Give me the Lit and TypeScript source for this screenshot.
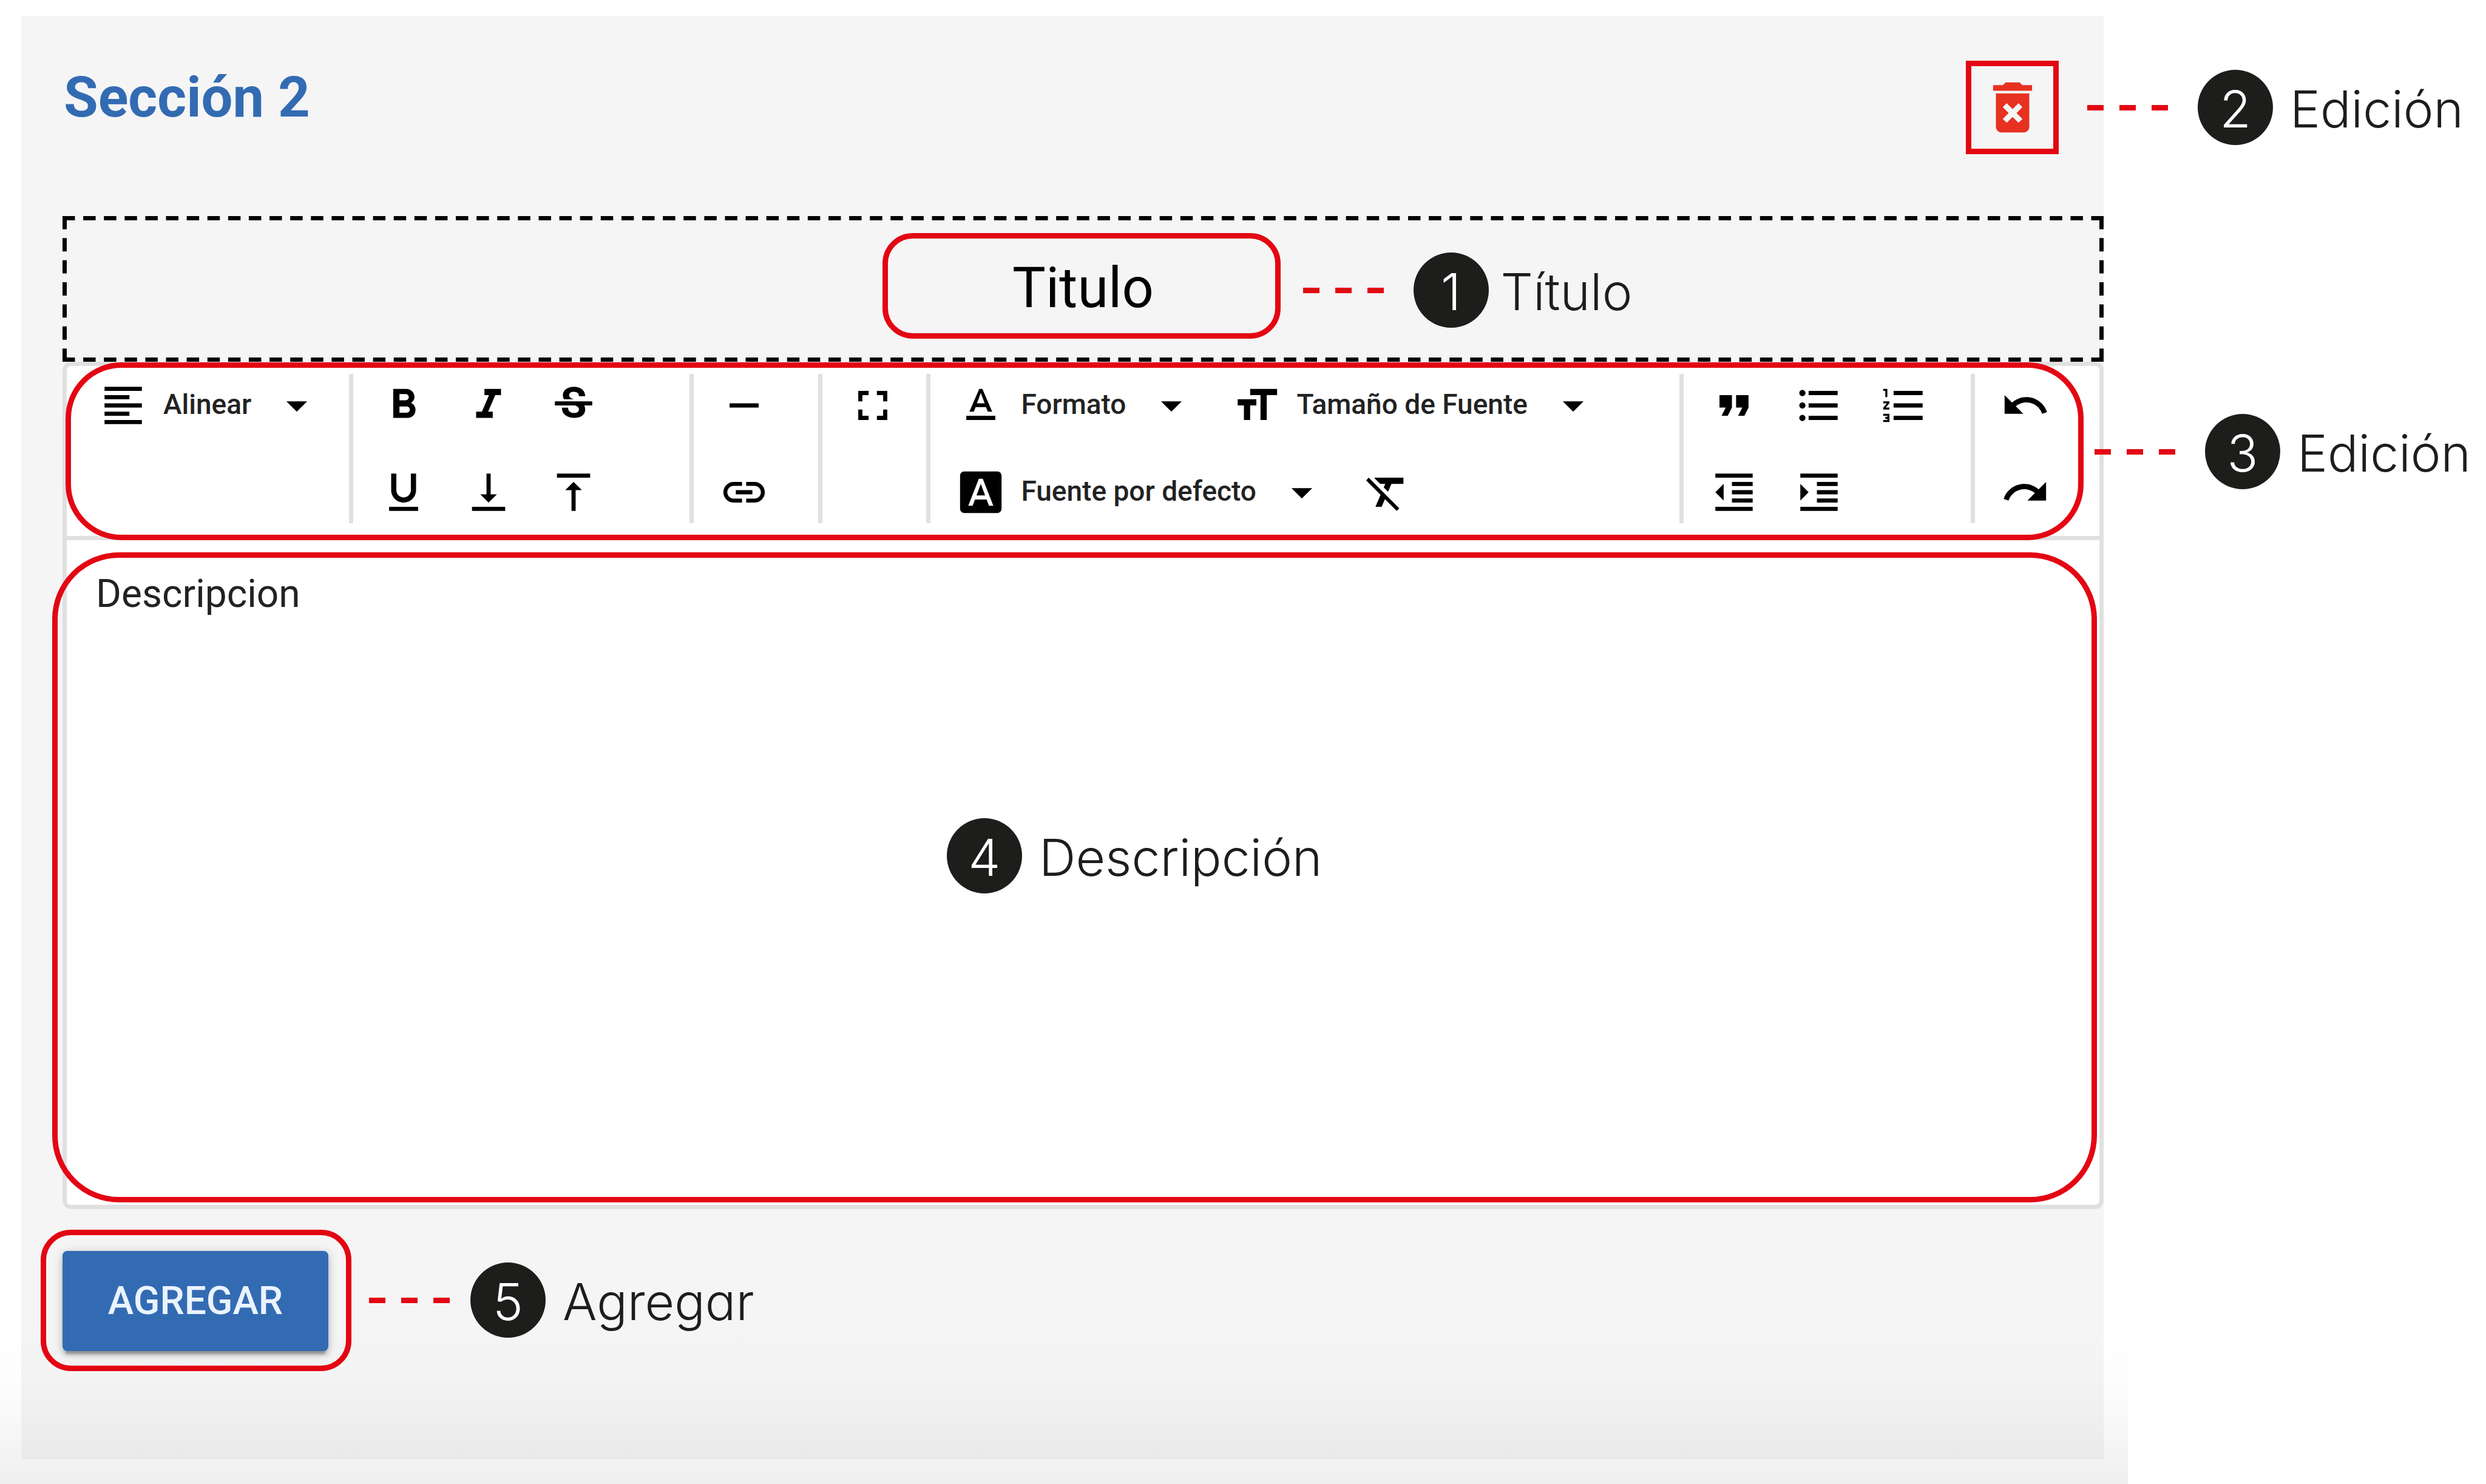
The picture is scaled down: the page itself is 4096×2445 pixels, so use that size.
import { LitElement, html, css, svg } from "lit";
import { customElement, property } from "lit/decorators.js";

/** Glyphs on a 24-unit grid. */
const ICONS: Record<string, string> = {
  alignLeft: "M15 15H3v2h12v-2zm0-8H3v2h12V7zM3 13h18v-2H3v2zm0 8h18v-2H3v2zM3 3v2h18V3H3z",
  caret: "M7 10l5 5 5-5z",
  bold: "M15.6 10.79c.97-.67 1.65-1.77 1.65-2.79 0-2.26-1.75-4-4-4H7v14h7.04c2.09 0 3.71-1.7 3.71-3.79 0-1.52-.86-2.82-2.15-3.42zM10 6.5h3c.83 0 1.5.67 1.5 1.5s-.67 1.5-1.5 1.5h-3v-3zm3.5 9H10v-3h3.5c.83 0 1.5.67 1.5 1.5s-.67 1.5-1.5 1.5z",
  italic: "M10 4v3h2.21l-3.42 8H6v3h8v-3h-2.21l3.42-8H18V4z",
  strike: "M7.24 8.75c-.26-.48-.39-1.03-.39-1.67 0-.61.13-1.16.4-1.67.26-.5.63-.93 1.11-1.29.48-.35 1.05-.63 1.7-.83.66-.19 1.39-.29 2.18-.29.81 0 1.54.11 2.21.34.66.22 1.23.54 1.69.94.47.4.83.88 1.08 1.43s.38 1.15.38 1.81h-3.01c0-.31-.05-.59-.15-.85-.09-.27-.24-.49-.44-.68-.2-.19-.45-.33-.75-.44-.3-.1-.66-.16-1.06-.16-.39 0-.74.04-1.03.13s-.53.21-.72.36c-.19.16-.34.34-.44.55-.1.21-.15.43-.15.66 0 .48.25.88.74 1.21.38.25.77.48 1.41.7H7.39c-.05-.08-.11-.17-.15-.25zM21 12v-2H3v2h9.62c.18.07.4.14.55.2.37.17.66.34.87.51s.35.36.43.57c.07.2.11.43.11.69 0 .23-.05.45-.14.66-.09.2-.23.38-.42.53-.19.15-.42.26-.71.35-.29.08-.63.13-1.01.13-.43 0-.83-.04-1.18-.13s-.66-.23-.91-.42c-.25-.19-.45-.44-.59-.75s-.25-.76-.25-1.21H6.4c0 .55.08 1.13.24 1.58s.37.85.65 1.21c.28.35.6.66.98.92.37.26.78.48 1.22.65.44.17.9.3 1.38.39.48.08.96.13 1.44.13.8 0 1.53-.09 2.18-.28s1.21-.45 1.67-.79c.46-.34.82-.77 1.07-1.27s.38-1.07.38-1.71c0-.6-.1-1.14-.31-1.61-.05-.11-.11-.23-.17-.33H21z",
  underline: "M12 17c3.31 0 6-2.69 6-6V3h-2.5v8c0 1.93-1.57 3.5-3.5 3.5S8.5 12.93 8.5 11V3H6v8c0 3.31 2.69 6 6 6zm-7 2v2h14v-2H5z",
  subscript: "M16 13h-3V3h-2v10H8l4 4 4-4zM4 19v2h16v-2H4z",
  superscript: "M8 11h3v10h2V11h3l-4-4-4 4zM4 3v2h16V3H4z",
  rule: "M19 13H5v-2h14v2z",
  link: "M3.9 12c0-1.71 1.39-3.1 3.1-3.1h4V7H7c-2.76 0-5 2.24-5 5s2.24 5 5 5h4v-1.900H7c-1.710 0-3.100-1.390-3.100-3.100zM8 13h8v-2H8v2zm9-6h-4v1.900h4c1.710 0 3.100 1.390 3.100 3.100s-1.390 3.100-3.100 3.100h-4V17h4c2.760 0 5-2.240 5-5s-2.240-5-5-5z",
  fullscreen: "M7 14H5v5h5v-2H7v-3zm-2-4h2V7h3V5H5v5zm12 7h-3v2h5v-5h-2v3zM14 5v2h3v3h2V5h-5z",
  format: "M5 17v2h14v-2H5zm4.500-4.200h5l.9 2.200h2.100L12.750 4h-1.500L6.500 15h2.100l.9-2.200zM12 5.980L13.870 11h-3.740L12 5.980z",
  size: "M9 4v3h5v12h3V7h5V4H9zm-6 8h3v7h3v-7h3V9H3v3z",
  font: "M9.930 13.500h4.140L12 7.980zM20 2H4c-1.100 0-2 .9-2 2v16c0 1.100.9 2 2 2h16c1.100 0 2-.9 2-2V4c0-1.100-.9-2-2-2zm-4.050 16.500l-1.140-3H9.170l-1.120 3H5.960l5.110-13h1.860l5.110 13h-2.090z",
  clear: "M3.270 5L2 6.270l6.970 6.970L6.500 19h3l1.570-3.660L16.730 21 18 19.730 3.550 5.270 3.270 5zM6 5v.180L8.820 8h2.400l-.720 1.680 2.100 2.100L14.210 8H20V5H6z",
  quote: "M6 17h3l2-4V7H5v6h3zm8 0h3l2-4V7h-6v6h3z",
  bullets: "M4 10.500c-.83 0-1.500.67-1.500 1.500s.67 1.500 1.500 1.500 1.500-.67 1.500-1.500-.67-1.500-1.500-1.500zm0-6c-.83 0-1.500.67-1.500 1.500S3.170 7.500 4 7.500 5.500 6.830 5.500 6 4.830 4.500 4 4.500zm0 12c-.83 0-1.500.68-1.500 1.500s.68 1.500 1.500 1.500 1.500-.68 1.500-1.500-.67-1.500-1.500-1.500zM7 19h14v-2H7v2zm0-6h14v-2H7v2zm0-8v2h14V5H7z",
  numbers: "M2 17h2v.5H3v1h1v.5H2v1h3v-4H2v1zm1-9h1V4H2v1h1v3zm-1 3h1.800L2 13.100v.9h3v-1H3.200L5 10.900V10H2v1zm5-6v2h14V5H7zm0 14h14v-2H7v2zm0-6h14v-2H7v2z",
  outdent: "M11 17h10v-2H11v2zm-8-5l4 4V8l-4 4zm0 9h18v-2H3v2zM3 3v2h18V3H3zm8 6h10V7H11v2zm0 4h10v-2H11v2z",
  indent: "M3 21h18v-2H3v2zM3 8v8l4-4-4-4zm8 9h10v-2H11v2zM3 3v2h18V3H3zm8 6h10V7H11v2zm0 4h10v-2H11v2z",
  undo: "M12.500 8c-2.650 0-5.050.99-6.900 2.600L2 7v9h9l-3.620-3.620c1.390-1.160 3.160-1.880 5.120-1.880 3.540 0 6.550 2.310 7.600 5.500l2.370-.78C21.080 11.030 17.150 8 12.500 8z",
  redo: "M18.400 10.600C16.550 8.990 14.150 8 11.500 8c-4.650 0-8.580 3.030-9.960 7.220L3.900 16c1.050-3.190 4.050-5.500 7.600-5.500 1.950 0 3.730.72 5.120 1.880L13 16h9V7l-3.600 3.600z",
  trash: "M6 19c0 1.100.9 2 2 2h8c1.100 0 2-.9 2-2V7H6v12zm2.460-7.120l1.410-1.410L12 12.590l2.120-2.120 1.410 1.410L13.410 14l2.120 2.120-1.410 1.410L12 15.410l-2.120 2.120-1.410-1.410L10.590 14l-2.130-2.120zM15.500 4l-1-1h-5l-1 1H5v2h14V4z",
};

const glyph = (name: string) => html`
  <svg class="glyph" viewBox="0 0 24 24" aria-hidden="true">${svg`<path d=${ICONS[name]}></path>`}</svg>
`;

interface Tool {
  icon: string;
  name: string;
  menu?: boolean;
}

/** Toolbar groups, each with its rows of tools. */
const GROUPS: Tool[][][] = [
  [[{ icon: "alignLeft", name: "Alinear", menu: true }]],
  [
    [
      { icon: "bold", name: "Negrita" },
      { icon: "italic", name: "Cursiva" },
      { icon: "strike", name: "Tachado" },
    ],
    [
      { icon: "underline", name: "Subrayado" },
      { icon: "subscript", name: "Subíndice" },
      { icon: "superscript", name: "Superíndice" },
    ],
  ],
  [[{ icon: "rule", name: "Línea horizontal" }], [{ icon: "link", name: "Enlace" }]],
  [[{ icon: "fullscreen", name: "Pantalla completa" }]],
  [
    [
      { icon: "format", name: "Formato", menu: true },
      { icon: "size", name: "Tamaño de Fuente", menu: true },
    ],
    [
      { icon: "font", name: "Fuente por defecto", menu: true },
      { icon: "clear", name: "Quitar formato" },
    ],
  ],
  [
    [
      { icon: "quote", name: "Cita" },
      { icon: "bullets", name: "Lista" },
      { icon: "numbers", name: "Lista numerada" },
    ],
    [
      { icon: "outdent", name: "Reducir sangría" },
      { icon: "indent", name: "Aumentar sangría" },
    ],
  ],
  [[{ icon: "undo", name: "Deshacer" }], [{ icon: "redo", name: "Rehacer" }]],
];

/** A numbered note: optional dashed leader, round badge and caption. */
@customElement("guide-note")
export class GuideNote extends LitElement {
  @property({ type: Number }) number = 1;
  @property() label = "";
  @property({ type: Boolean }) leader = false;

  static styles = css`
    :host {
      display: flex;
      align-items: center;
      height: 124px;
      color: #1d1d1b;
      font: 350 84px/100px Inter, "Liberation Sans", sans-serif;
      font-feature-settings: "cv11";
      white-space: nowrap;
      pointer-events: none;
    }
    .leader {
      flex: none;
      width: 133px;
      height: 9px;
      margin-right: var(--leader-gap, 49px);
      background: repeating-linear-gradient(90deg, #e30613 0 27px, transparent 27px 53px);
    }
    .badge {
      box-sizing: border-box;
      flex: none;
      width: 124px;
      height: 124px;
      padding-top: 15px;
      border-radius: 50%;
      background: #1d1d1b;
      color: #fff;
      text-align: center;
    }
    .caption {
      padding: 6px 0 0 var(--caption-gap, 28px);
    }
  `;

  render() {
    return html`
      ${this.leader ? html`<span class="leader"></span>` : null}
      <span class="badge">${this.number}</span>
      <span class="caption">${this.label}</span>
    `;
  }
}

@customElement("app-root")
export class AppRoot extends LitElement {
  static styles = css`
    :host {
      display: block;
      font-family: Roboto, "Liberation Sans", sans-serif;
      color: #000;
      background: #fff;
      --red: #e30613;
      --line: #e0e0e0;
    }
    * {
      box-sizing: border-box;
    }
    button,
    input,
    textarea {
      margin: 0;
      padding: 0;
      border: 0;
      background: none;
      color: inherit;
      font: inherit;
      outline: 0;
    }
    .page {
      display: flex;
      min-height: 100vh;
      padding-right: 590px;
      overflow: hidden;
    }
    .sheet {
      position: relative;
      display: flex;
      flex: 1;
      padding: 27px 40px 41px 35px;
    }
    .shade {
      position: absolute;
      inset: auto 0 0 0;
      height: 264px;
      background: linear-gradient(
        rgba(0, 0, 0, 0),
        rgba(0, 0, 0, 0.012) 42%,
        rgba(0, 0, 0, 0.035) 70%,
        rgba(0, 0, 0, 0.048) 84%,
        rgba(0, 0, 0, 0.065)
      );
      pointer-events: none;
    }
    .panel {
      display: flex;
      flex: 1;
      flex-direction: column;
      padding-left: 68px;
      background: #f5f5f5;
    }
    .head {
      display: flex;
      justify-content: space-between;
      align-items: flex-start;
      height: 329px;
      padding: 73px 74px 0 0;
    }
    h1 {
      margin: 0;
      padding-left: 2px;
      color: #336bb3;
      font-size: 92px;
      font-weight: 700;
      line-height: 122px;
    }
    .anchor {
      position: relative;
    }
    .delete {
      display: grid;
      place-items: center;
      width: 153px;
      height: 154px;
      border: 9px solid var(--red);
      color: #e73121;
      --glyph: 110px;
    }
    .glyph {
      display: block;
      flex: none;
      width: var(--glyph, 82px);
      height: var(--glyph, 82px);
      fill: currentColor;
    }
    .note {
      position: absolute;
      z-index: 2;
    }
    .note-delete {
      top: 15px;
      left: 200px;
    }
    .note-title {
      top: 60px;
      left: calc(50% + 362px);
      --caption-gap: 20px;
    }
    .note-tools {
      top: 79px;
      left: calc(100% - 8px);
    }
    .note-body {
      top: 458px;
      left: 1450px;
    }
    .note-add {
      top: 19px;
      left: 505px;
      --leader-gap: 34px;
    }
    .frame {
      position: absolute;
      z-index: 1;
      border: 9px solid var(--red);
      border-radius: 50px;
      pointer-events: none;
    }
    .frame-title {
      inset: 28px calc(50% - 325px) 38px calc(50% - 331px);
    }
    .frame-tools {
      inset: -6px 26px -7px -2px;
      border-radius: 92px;
    }
    .frame-body {
      inset: 20px 4px 4px -24px;
      border-radius: 110px;
    }
    .frame-add {
      inset: -35px -38px -33px -36px;
    }
    .title-field {
      position: relative;
      height: 240px;
    }
    .dashes {
      position: absolute;
      inset: 0;
      width: 100%;
      height: 100%;
      stroke: #000;
      stroke-width: 14;
      stroke-dasharray: 3 2;
      pointer-events: none;
    }
    .title-input {
      display: block;
      width: 100%;
      height: 236px;
      text-align: center;
      font-size: 92px;
      line-height: 118px;
    }
    .editor {
      display: flex;
      flex: 1;
      flex-direction: column;
      border: 7px solid var(--line);
      border-radius: 14px;
      background: #fff;
    }
    .tools {
      position: relative;
      display: grid;
      grid-template-columns: 462fr 561fr 212fr 178fr 1240fr 480fr 205fr;
      padding: 13px 0 21px 10px;
      border-bottom: 7px solid var(--line);
    }
    .group {
      display: flex;
      flex-direction: column;
      gap: 40px;
      height: 246px;
      padding-left: 32px;
      border-right: 7px solid var(--line);
    }
    .group:last-of-type {
      border-right: 0;
    }
    .row {
      display: flex;
      gap: 38px;
    }
    .tool {
      display: flex;
      align-items: center;
      height: 103px;
      padding: 0 10px;
      white-space: nowrap;
      cursor: pointer;
    }
    .tool-label {
      padding: 0 34px 4px 25px;
      color: #222;
      font-size: 46px;
      font-weight: 500;
      line-height: 56px;
    }
    .body {
      position: relative;
      display: flex;
      flex: 1;
    }
    .body-text {
      display: block;
      width: 100%;
      padding: 49px 48px;
      color: #222;
      font-size: 64px;
      line-height: 80px;
      resize: none;
    }
    .foot {
      display: flex;
      align-items: flex-start;
      height: 412px;
      padding-top: 69px;
    }
    .add {
      display: block;
      width: 438px;
      height: 165px;
      border-radius: 8px;
      background: #336bb3;
      color: #eaf3fd;
      font-size: 64px;
      font-weight: 500;
      text-align: center;
      box-shadow:
        0 3px 17px rgba(0, 0, 0, 0.2),
        0 7px 7px rgba(0, 0, 0, 0.14),
        0 10px 3px -5px rgba(0, 0, 0, 0.2);
      cursor: pointer;
    }
  `;

  private tool(t: Tool) {
    return html`
      <button class="tool" type="button" aria-label=${t.name}>
        ${glyph(t.icon)}
        ${t.menu ? html`<span class="tool-label">${t.name}</span>${glyph("caret")}` : null}
      </button>
    `;
  }

  render() {
    return html`
      <div class="page">
        <div class="sheet">
          <main class="panel">
            <header class="head">
              <h1>Sección 2</h1>
              <div class="anchor">
                <button class="delete" type="button" aria-label="Eliminar">${glyph("trash")}</button>
                <guide-note class="note note-delete" number="2" label="Edición" leader></guide-note>
              </div>
            </header>

            <div class="title-field">
              <svg class="dashes" aria-hidden="true">
                <line x1="0" y1="0" x2="100%" y2="0" pathLength="493"></line>
                <line x1="0" y1="100%" x2="100%" y2="100%" pathLength="493"></line>
                <line x1="0" y1="0" x2="0" y2="100%" pathLength="33"></line>
                <line x1="100%" y1="0" x2="100%" y2="100%" pathLength="33"></line>
              </svg>
              <input class="title-input" type="text" aria-label="Título" .value=${"Titulo"} />
              <div class="frame frame-title"></div>
              <guide-note class="note note-title" number="1" label="Título" leader></guide-note>
            </div>

            <section class="editor">
              <div class="tools" role="toolbar" aria-label="Edición">
                ${GROUPS.map(
                  (rows) => html`
                    <section class="group">
                      ${rows.map((row) => html`<div class="row">${row.map((t) => this.tool(t))}</div>`)}
                    </section>
                  `
                )}
                <div class="frame frame-tools"></div>
                <guide-note class="note note-tools" number="3" label="Edición" leader></guide-note>
              </div>
              <div class="body">
                <textarea class="body-text" aria-label="Descripción" .value=${"Descripcion"}></textarea>
                <div class="frame frame-body"></div>
                <guide-note class="note note-body" number="4" label="Descripción"></guide-note>
              </div>
            </section>

            <footer class="foot">
              <div class="anchor">
                <button class="add" type="button">AGREGAR</button>
                <div class="frame frame-add"></div>
                <guide-note class="note note-add" number="5" label="Agregar" leader></guide-note>
              </div>
            </footer>
          </main>
          <div class="shade"></div>
        </div>
      </div>
    `;
  }
}
